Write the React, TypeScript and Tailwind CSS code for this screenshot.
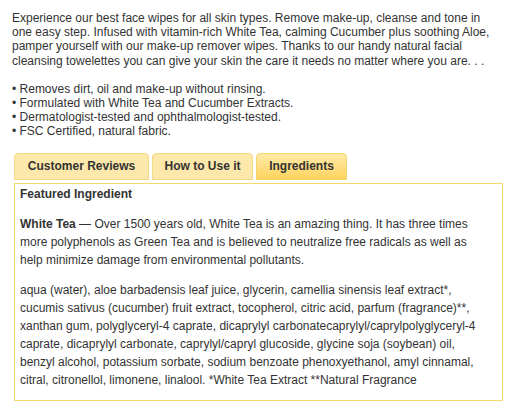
export default function App() {
  const font = { fontFamily: '"Liberation Sans", Arial, sans-serif' };
  return (
    <div className="w-[521px] h-[419px] bg-white text-[#333] text-[12px]" style={font}>
      <div className="pl-[12px] pt-[11px] w-[503px] leading-[14.2px]">
        <p>
          Experience our best face wipes for all skin types. Remove make-up, cleanse and tone in one easy step. Infused with vitamin-rich White Tea, calming Cucumber plus soothing Aloe, pamper yourself with our make-up remover wipes. Thanks to our handy natural facial cleansing towelettes you can give your skin the care it needs no matter where you are. . .
        </p>
        <p className="mt-[14px]">• Removes dirt, oil and make-up without rinsing.</p>
        <p>• Formulated with White Tea and Cucumber Extracts.</p>
        <p>• Dermatologist-tested and ophthalmologist-tested.</p>
        <p>• FSC Certified, natural fabric.</p>
      </div>
      <div className="ml-[14px] mt-[14px] w-[489px]">
        <div className="flex gap-[3px] h-[27px]">
          <div className="w-[135px] flex items-center justify-center rounded-t-[4px] border border-[#f3d983] bg-[#fde8ab] font-bold text-[12px] text-[#333]">
            Customer Reviews
          </div>
          <div className="w-[101px] flex items-center justify-center rounded-t-[4px] border border-[#f3d983] bg-[#fde8ab] font-bold text-[12px] text-[#333]">
            How to Use it
          </div>
          <div className="w-[91px] flex items-center justify-center rounded-t-[4px] border border-[#f2d46c] bg-gradient-to-b from-[#feeaa6] to-[#ffd35c] font-bold text-[12px] text-[#333]">
            Ingredients
          </div>
        </div>
        <div className="mt-[3px] border border-[#f5d96f] pl-[5px] pr-[11px] pt-[1px] pb-[12px] h-[218px] leading-[18px]">
          <p className="font-bold">Featured Ingredient</p>
          <p className="mt-[12px]">
            <span className="font-bold">White Tea</span> — Over 1500 years old, White Tea is an amazing thing. It has three times more polyphenols as Green Tea and is believed to neutralize free radicals as well as help minimize damage from environmental pollutants.
          </p>
          <p className="mt-[12px]">
            aqua (water), aloe barbadensis leaf juice, glycerin, camellia sinensis leaf extract*, cucumis sativus (cucumber) fruit extract, tocopherol, citric acid, parfum (fragrance)**, xanthan gum, polyglyceryl-4 caprate, dicaprylyl carbonatecaprylyl/caprylpolyglyceryl-4 caprate, dicaprylyl carbonate, caprylyl/capryl glucoside, glycine soja (soybean) oil, benzyl alcohol, potassium sorbate, sodium benzoate phenoxyethanol, amyl cinnamal, citral, citronellol, limonene, linalool. *White Tea Extract **Natural Fragrance
          </p>
        </div>
      </div>
    </div>
  );
}
